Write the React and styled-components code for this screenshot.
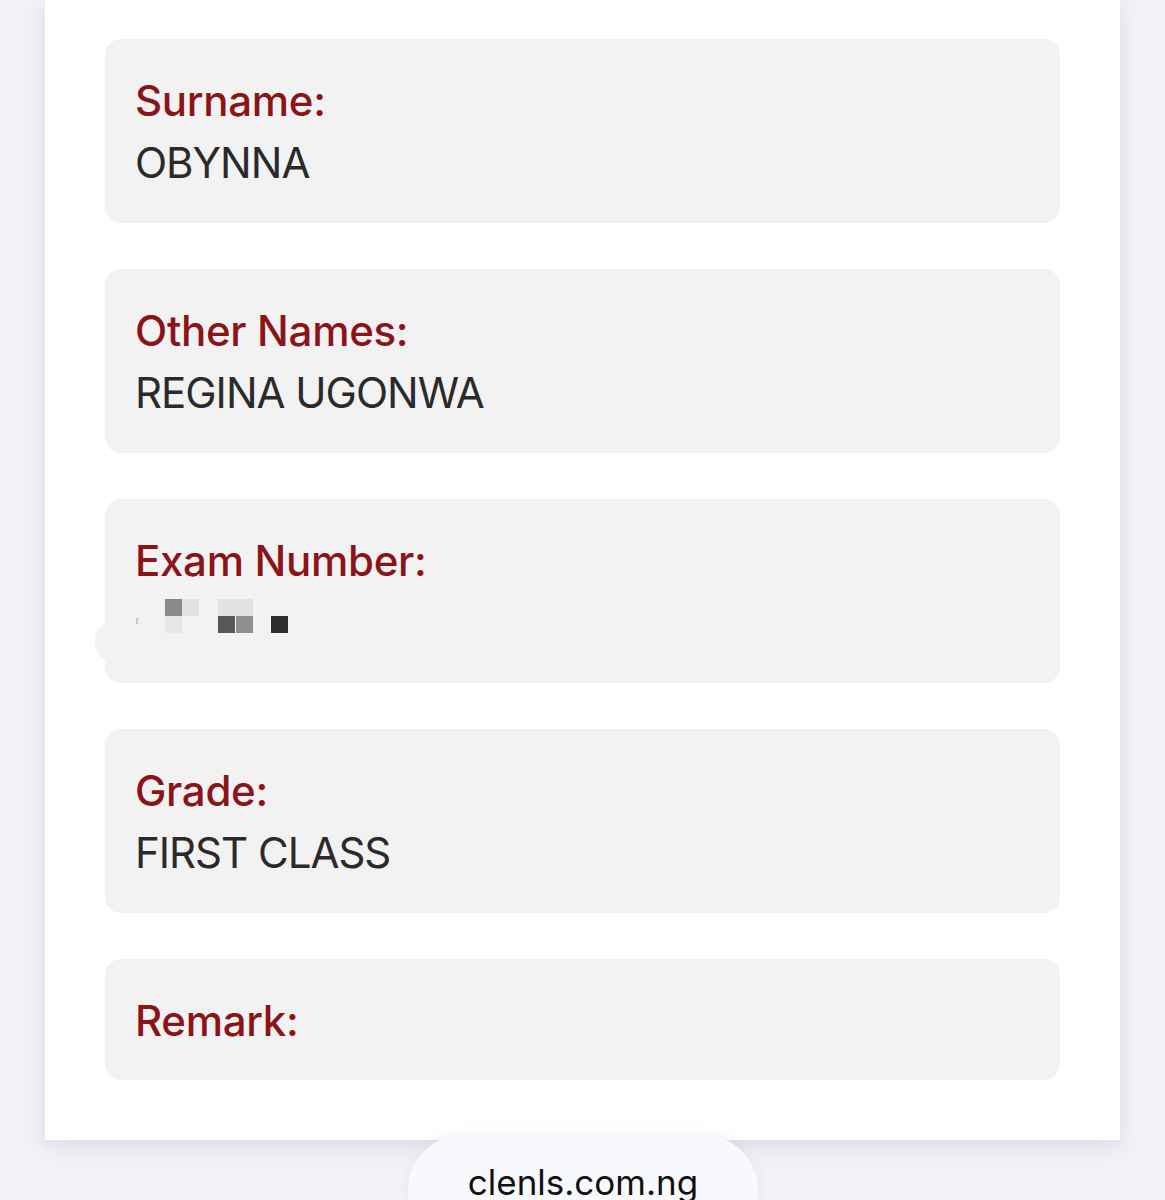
import React from 'react';
import styled, { createGlobalStyle } from 'styled-components';

const Global = createGlobalStyle`
  html, body {
    margin: 0;
    padding: 0;
    background: #f1f2f7;
    height: 1200px;
    overflow: hidden;
    font-family: Inter, "Noto Sans", "Liberation Sans", sans-serif;
  }
`;

const Page = styled.div`
  position: relative;
  height: 1200px;
  padding: 0 45px;
`;

const Sheet = styled.main`
  background: #ffffff;
  height: 1140px;
  box-sizing: border-box;
  padding: 39px 60px 0;
  display: flex;
  flex-direction: column;
  gap: 46px;
  box-shadow: 0 6px 18px rgba(60, 64, 90, 0.12);
`;

const Field = styled.section`
  position: relative;
  background: #f2f2f3;
  border-radius: 16px;
  height: ${p => (p.$short ? '121px' : '184px')};
  box-sizing: border-box;
  padding: 31px 30px 0;
`;

const Label = styled.div`
  color: #8b1419;
  font-size: 42px;
  font-weight: 500;
  letter-spacing: -0.3px;
  line-height: 62px;
`;

const Value = styled.div`
  color: #2a2a2a;
  font-size: 42px;
  font-weight: 400;
  letter-spacing: -1px;
  line-height: 62px;
`;

const Bump = styled.div`
  position: absolute;
  left: -10px;
  top: 121px;
  width: 40px;
  height: 42px;
  border-radius: 21px;
  background: #f2f2f3;
`;

const Masked = styled.svg`
  display: block;
  height: 62px;
`;

const blur = [
  { x: 30, y: 7, c: '#8a8a8a' },
  { x: 47, y: 7, c: '#e2e2e2' },
  { x: 30, y: 24, c: '#e7e7e7' },
  { x: 83, y: 7, c: '#e2e2e2', w: 35 },
  { x: 83, y: 24, c: '#575757' },
  { x: 101, y: 24, c: '#8f8f8f' },
  { x: 136, y: 24, c: '#2e2e2e' },
  { x: 1, y: 26, c: '#c8c8c8', w: 2, h: 6 },
];

const UrlPill = styled.div`
  position: absolute;
  left: 408px;
  top: 1135px;
  width: 350px;
  height: 110px;
  border-radius: 55px;
  background: #f8f9fc;
  box-shadow: 0 -2px 14px rgba(60, 64, 90, 0.06);
  text-align: center;
  font-family: Inter, "Liberation Sans", sans-serif;
  font-size: 35px;
  color: #111;
  line-height: 94px;
`;

const fields = [
  { label: 'Surname:', value: 'OBYNNA' },
  { label: 'Other Names:', value: 'REGINA UGONWA' },
  { label: 'Exam Number:', hidden: true },
  { label: 'Grade:', value: 'FIRST CLASS' },
  { label: 'Remark:', short: true },
];

export default function App() {
  return (
    <>
      <Global />
      <Page>
        <Sheet>
          {fields.map(f => (
            <Field key={f.label} $short={f.short}>
              <Label>{f.label}</Label>
              {f.value && <Value>{f.value}</Value>}
              {f.hidden && (
                <>
                  <Masked width="160" viewBox="0 0 160 62">
                    {blur.map((b, i) => (
                      <rect key={i} x={b.x} y={b.y} width={b.w || 17} height={b.h || 17} fill={b.c} />
                    ))}
                  </Masked>
                  <Bump />
                </>
              )}
            </Field>
          ))}
        </Sheet>
        <UrlPill>clenls.com.ng</UrlPill>
      </Page>
    </>
  );
}
